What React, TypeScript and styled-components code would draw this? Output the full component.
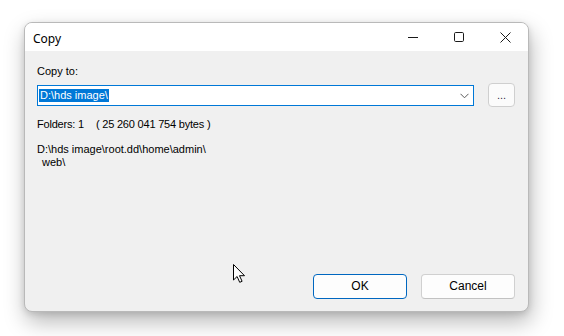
import styled, { createGlobalStyle } from "styled-components";

const GlobalStyle = createGlobalStyle`
  html, body {
    margin: 0;
    padding: 0;
    background: #ffffff;
  }
  body {
    width: 564px;
    height: 336px;
    overflow: hidden;
    font-family: "Liberation Sans", Arial, sans-serif;
  }
`;

export default function App() {
  return (
    <>
      <GlobalStyle />
      <Desktop>
        <Window>
          <TitleBar>
            <Title>Copy</Title>
            <Controls>
              <ControlButton aria-label="Minimize">
                <svg width="10" height="10" viewBox="0 0 10 10">
                  <path d="M0 5.5h10" stroke="#1a1a1a" strokeWidth="1" />
                </svg>
              </ControlButton>
              <ControlButton aria-label="Maximize">
                <svg width="10" height="10" viewBox="0 0 10 10">
                  <rect x="0.5" y="0.5" width="9" height="9" rx="1.2" fill="none" stroke="#1a1a1a" strokeWidth="1" />
                </svg>
              </ControlButton>
              <ControlButton aria-label="Close">
                <svg width="11" height="11" viewBox="0 0 11 11">
                  <path d="M0.5 0.5l10 10M10.5 0.5l-10 10" stroke="#1a1a1a" strokeWidth="1" />
                </svg>
              </ControlButton>
            </Controls>
          </TitleBar>
          <Body>
            <Label>Copy to:</Label>
            <ComboRow>
              <Combo>
                <Selected>D:\hds image\</Selected>
                <Chevron width="9" height="6" viewBox="0 0 9 6">
                  <path d="M0.5 0.8l4 4 4-4" fill="none" stroke="#5a5a5a" strokeWidth="1" />
                </Chevron>
              </Combo>
              <BrowseButton>...</BrowseButton>
            </ComboRow>
            <Info>
              Folders: 1<Gap />( 25 260 041 754 bytes )
            </Info>
            <PathBlock>
              <PathLine>D:\hds image\root.dd\home\admin\</PathLine>
              <PathLine $indent>web\</PathLine>
            </PathBlock>
            <Footer>
              <DialogButton $primary>OK</DialogButton>
              <DialogButton>Cancel</DialogButton>
            </Footer>
            <Cursor width="12" height="19" viewBox="0 0 12 19">
              <path
                d="M0.5 0.5v15.5l3.6-3.5 2.6 5.8 2.4-1-2.6-5.6h5z"
                fill="#ffffff"
                stroke="#000000"
                strokeWidth="1"
                strokeLinejoin="miter"
              />
            </Cursor>
          </Body>
        </Window>
      </Desktop>
    </>
  );
}

const Desktop = styled.div`
  padding: 22px 0 0 24px;
`;

const Window = styled.div`
  width: 503px;
  height: 288px;
  border: 1px solid #b9b9b9;
  border-radius: 8px;
  overflow: hidden;
  display: flex;
  flex-direction: column;
  background: #f0f0f0;
  box-shadow: 2px 10px 22px rgba(0, 0, 0, 0.28), 0 2px 6px rgba(0, 0, 0, 0.12);
`;

const TitleBar = styled.div`
  height: 28px;
  background: #ffffff;
  display: flex;
  align-items: center;
  justify-content: space-between;
`;

const Title = styled.div`
  padding-left: 8px;
  padding-top: 2px;
  font-family: "Noto Sans", "Open Sans", sans-serif;
  font-size: 12px;
  color: #000;
`;

const Controls = styled.div`
  display: flex;
  height: 100%;
`;

const ControlButton = styled.div`
  width: 46px;
  height: 100%;
  display: flex;
  align-items: center;
  justify-content: center;
`;

const Body = styled.div`
  position: relative;
  flex: 1;
  display: flex;
  flex-direction: column;
  padding: 14px 13px 12px 12px;
  font-size: 11px;
  line-height: 13px;
  color: #000;
`;

const Label = styled.div`
  height: 13px;
`;

const ComboRow = styled.div`
  display: flex;
  align-items: center;
  gap: 14px;
  margin-top: 5px;
`;

const Combo = styled.div`
  width: 432px;
  height: 19px;
  border: 1px solid #0078d7;
  background: #ffffff;
  display: flex;
  align-items: center;
  justify-content: space-between;
  padding: 0 4px 0 1px;
`;

const Selected = styled.span`
  background: #0078d7;
  color: #ffffff;
  padding: 0 1px;
  height: 13px;
  line-height: 13px;
`;

const Chevron = styled.svg`
  margin-top: 1px;
`;

const BrowseButton = styled.div`
  width: 25px;
  height: 22px;
  border: 1px solid #cfcfcf;
  border-radius: 4px;
  background: #fbfbfb;
  display: flex;
  align-items: center;
  justify-content: center;
  color: #3a1f4a;
  font-size: 11px;
`;

const Info = styled.div`
  margin-top: 11px;
  height: 13px;
  letter-spacing: -0.2px;
`;

const Gap = styled.span`
  display: inline-block;
  width: 12px;
`;

const PathBlock = styled.div`
  margin-top: 12px;
`;

const PathLine = styled.div<{ $indent?: boolean }>`
  height: 13px;
  padding-left: ${(p) => (p.$indent ? "5px" : "0")};
`;

const Footer = styled.div`
  margin-top: auto;
  display: flex;
  justify-content: flex-end;
  gap: 14px;
`;

const DialogButton = styled.div<{ $primary?: boolean }>`
  width: 92px;
  height: 23px;
  border: 1px solid ${(p) => (p.$primary ? "#0067c0" : "#d0d0d0")};
  border-bottom-color: ${(p) => (p.$primary ? "#0067c0" : "#c2c2c2")};
  border-radius: 4px;
  background: #fdfdfd;
  display: flex;
  align-items: center;
  justify-content: center;
  font-size: 12px;
  color: #000;
`;

const Cursor = styled.svg`
  position: absolute;
  left: 208px;
  top: 213px;
`;
